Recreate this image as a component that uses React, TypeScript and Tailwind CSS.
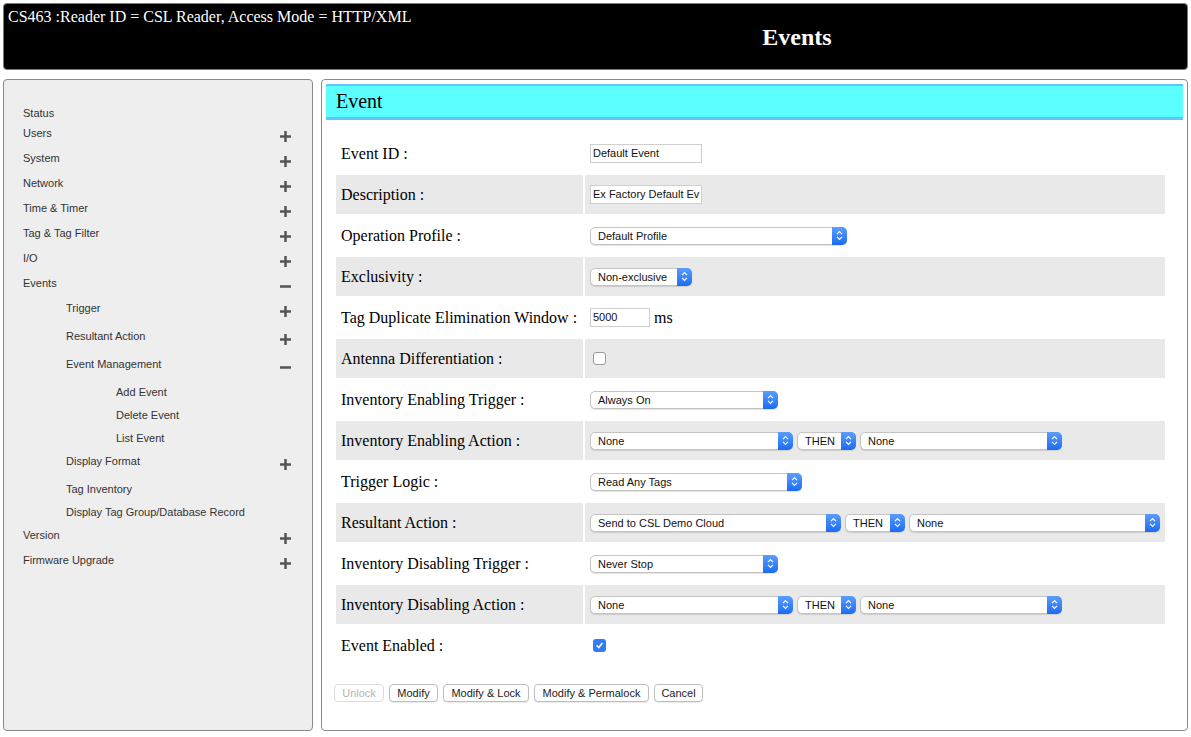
import React from 'react'

type MenuItem = { label: string; level: 0 | 1 | 2; icon?: 'plus' | 'minus' }

const menu: MenuItem[] = [
  { label: 'Status', level: 0 },
  { label: 'Users', level: 0, icon: 'plus' },
  { label: 'System', level: 0, icon: 'plus' },
  { label: 'Network', level: 0, icon: 'plus' },
  { label: 'Time & Timer', level: 0, icon: 'plus' },
  { label: 'Tag & Tag Filter', level: 0, icon: 'plus' },
  { label: 'I/O', level: 0, icon: 'plus' },
  { label: 'Events', level: 0, icon: 'minus' },
  { label: 'Trigger', level: 1, icon: 'plus' },
  { label: 'Resultant Action', level: 1, icon: 'plus' },
  { label: 'Event Management', level: 1, icon: 'minus' },
  { label: 'Add Event', level: 2 },
  { label: 'Delete Event', level: 2 },
  { label: 'List Event', level: 2 },
  { label: 'Display Format', level: 1, icon: 'plus' },
  { label: 'Tag Inventory', level: 1 },
  { label: 'Display Tag Group/Database Record', level: 1 },
  { label: 'Version', level: 0, icon: 'plus' },
  { label: 'Firmware Upgrade', level: 0, icon: 'plus' },
]

const PlusMinus = ({ kind }: { kind: 'plus' | 'minus' }) => (
  <svg width="11" height="11" viewBox="0 0 11 11" className="mt-[5px] shrink-0">
    <rect x="0" y="4.25" width="11" height="2.5" fill="#555" />
    {kind === 'plus' && <rect x="4.25" y="0" width="2.5" height="11" fill="#555" />}
  </svg>
)

const Sidebar = () => (
  <div className="w-[310px] shrink-0 h-full bg-[#eeeeee] border border-[#8a8a8a] rounded-[4px] pt-[26px] font-['Liberation_Sans',Arial,sans-serif] text-[11px] text-[#333]">
    {menu.map((m) => {
      const h = m.level === 0 ? (m.icon ? 'h-[25px]' : 'h-[20px]') : m.icon ? 'h-[28px]' : 'h-[23px]'
      const pl = m.level === 0 ? 'pl-[19px]' : m.level === 1 ? 'pl-[62px]' : 'pl-[112px]'
      return (
        <div key={m.label} className={`flex items-start pr-[21px] ${h} ${pl}`}>
          <span className="flex-1 leading-[14px]">{m.label}</span>
          {m.icon && <PlusMinus kind={m.icon} />}
        </div>
      )
    })}
  </div>
)

const Chevrons = () => (
  <svg width="7" height="11" viewBox="0 0 7 11">
    <path d="M1 4.2 L3.5 1.7 L6 4.2 M1 6.8 L3.5 9.3 L6 6.8" stroke="white" strokeWidth="1.2" fill="none" />
  </svg>
)

const Select = ({ value, w }: { value: string; w: string }) => (
  <div className={`flex h-[18px] items-stretch rounded-[5px] border border-[#c4c4c4] bg-white shadow-[0_1px_1px_rgba(0,0,0,0.12)] font-['Liberation_Sans',Arial,sans-serif] ${w}`}>
    <span className="flex-1 pl-[7px] text-[11px] leading-[16px] text-[#111] whitespace-nowrap overflow-hidden">{value}</span>
    <span className="w-[15px] -my-px -mr-px flex items-center justify-center rounded-r-[5px] bg-linear-to-b from-[#5a9dfc] to-[#1a6bf2]">
      <Chevrons />
    </span>
  </div>
)

const TextBox = ({ value, w }: { value: string; w: string }) => (
  <div className={`h-[19px] border border-[#cfcfcf] bg-white px-[2px] text-[11px] leading-[17px] text-[#111] whitespace-nowrap overflow-hidden font-['Liberation_Sans',Arial,sans-serif] ${w}`}>
    {value}
  </div>
)

const Check = ({ on }: { on?: boolean }) =>
  on ? (
    <div className="ml-[3px] w-[13px] h-[13px] rounded-[3px] bg-[#2f7cf6] flex items-center justify-center">
      <svg width="9" height="9" viewBox="0 0 9 9">
        <path d="M2 4.8 L3.8 6.6 L7 2.4" stroke="white" strokeWidth="1.6" fill="none" strokeLinecap="round" strokeLinejoin="round" />
      </svg>
    </div>
  ) : (
    <div className="ml-[3px] w-[13px] h-[13px] rounded-[3px] border border-[#9a9a9a] bg-white" />
  )

const actionCells = (
  <div className="flex gap-[4px]">
    <Select value="None" w="w-[203px]" />
    <Select value="THEN" w="w-[59px]" />
    <Select value="None" w="w-[202px]" />
  </div>
)

const rows: { label: string; node: React.ReactNode }[] = [
  { label: 'Event ID :', node: <TextBox value="Default Event" w="w-[112px]" /> },
  { label: 'Description :', node: <TextBox value="Ex Factory Default Ev" w="w-[112px]" /> },
  { label: 'Operation Profile :', node: <Select value="Default Profile" w="w-[257px]" /> },
  { label: 'Exclusivity :', node: <Select value="Non-exclusive" w="w-[102px]" /> },
  {
    label: 'Tag Duplicate Elimination Window :',
    node: (
      <div className="flex items-center gap-[4px]">
        <TextBox value="5000" w="w-[60px]" />
        <span className="text-[16px]">ms</span>
      </div>
    ),
  },
  { label: 'Antenna Differentiation :', node: <Check /> },
  { label: 'Inventory Enabling Trigger :', node: <Select value="Always On" w="w-[188px]" /> },
  { label: 'Inventory Enabling Action :', node: actionCells },
  { label: 'Trigger Logic :', node: <Select value="Read Any Tags" w="w-[212px]" /> },
  {
    label: 'Resultant Action :',
    node: (
      <div className="flex gap-[4px]">
        <Select value="Send to CSL Demo Cloud" w="w-[251px]" />
        <Select value="THEN" w="w-[60px]" />
        <Select value="None" w="w-[251px]" />
      </div>
    ),
  },
  { label: 'Inventory Disabling Trigger :', node: <Select value="Never Stop" w="w-[188px]" /> },
  { label: 'Inventory Disabling Action :', node: actionCells },
  { label: 'Event Enabled :', node: <Check on /> },
]

const buttons = [
  { label: 'Unlock', w: 'w-[50px]', off: true },
  { label: 'Modify', w: 'w-[49px]' },
  { label: 'Modify & Lock', w: 'w-[86px]' },
  { label: 'Modify & Permalock', w: 'w-[115px]' },
  { label: 'Cancel', w: 'w-[49px]' },
]

export default function App() {
  return (
    <div className="w-[1191px] h-[737px] bg-white px-[3px] pt-[3px] pb-[6px] flex flex-col gap-[9px] font-['Liberation_Serif','Times_New_Roman',serif] text-black">
      {/* title bar */}
      <div className="h-[67px] shrink-0 bg-black border border-[#7a7a7a] rounded-[4px] pt-[4px] text-white">
        <div className="pl-[4px] text-[16px] leading-[18px]">CS463 :Reader ID = CSL Reader, Access Mode = HTTP/XML</div>
        <div className="ml-[403px] -mt-[3px] text-center text-[24px] leading-[28px] font-bold">Events</div>
      </div>

      <div className="flex-1 flex gap-[8px] min-h-0">
        <Sidebar />

        <div className="flex-1 h-full border border-[#8a8a8a] rounded-[4px] p-[4px]">
          <div className="h-[36px] bg-[#5cffff] border-t-2 border-b-[3px] border-[#62c4ff] pl-[10px] text-[20px] leading-[31px]">
            Event
          </div>

          <div className="ml-[10px] mt-[14px] w-[829px] flex flex-col gap-[2px]">
            {rows.map((r, i) => {
              const bg = i % 2 === 1 ? 'bg-[#e9e9e9]' : 'bg-white'
              return (
                <div key={r.label} className="flex gap-[2px] h-[39px]">
                  <div className={`w-[247px] shrink-0 flex items-center px-[5px] text-[16px] leading-[18px] ${bg}`}>{r.label}</div>
                  <div className={`flex-1 flex items-center px-[5px] ${bg}`}>{r.node}</div>
                </div>
              )
            })}
          </div>

          <div className="ml-[8px] mt-[19px] flex gap-[5px] font-['Liberation_Sans',Arial,sans-serif]">
            {buttons.map((b) => (
              <div
                key={b.label}
                className={`h-[18px] ${b.w} flex items-center justify-center rounded-[4px] border bg-white text-[11px] whitespace-nowrap ${
                  b.off ? 'border-[#dcdcdc] text-[#b5b5b5]' : 'border-[#bdbdbd] text-[#222] shadow-[0_1px_1px_rgba(0,0,0,0.08)]'
                }`}
              >
                {b.label}
              </div>
            ))}
          </div>
        </div>
      </div>
    </div>
  )
}
